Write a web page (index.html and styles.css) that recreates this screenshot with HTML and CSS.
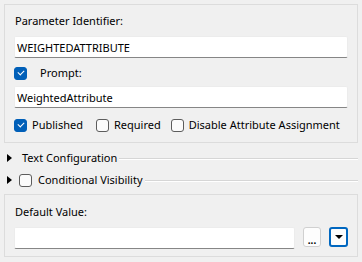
FILE: index.html
```html
<!DOCTYPE html>
<html lang="en">
<head>
    <meta charset="UTF-8">
    <title>Parameter Editor</title>
    <link rel="stylesheet" href="styles.css">
</head>
<body>
    <div class="group group-main">
        <div class="label">Parameter Identifier:</div>
        <input type="text" class="field field-id" value="WEIGHTEDATTRIBUTE">

        <div class="check-row row-prompt">
            <span class="box checked"></span>
            <span class="prompt-text">Prompt:</span>
        </div>
        <input type="text" class="field field-prompt" value="WeightedAttribute">

        <div class="check-row row-flags">
            <label class="check"><span class="box checked"></span>Published</label>
            <label class="check check-required"><span class="box"></span>Required</label>
            <label class="check"><span class="box"></span>Disable Attribute Assignment</label>
        </div>
    </div>

    <div class="section-head head-text">
        <span class="arrow"></span>
        <span class="head-title">Text Configuration</span>
        <span class="rule"></span>
    </div>
    <div class="section-head head-cond">
        <span class="arrow"></span>
        <span class="box"></span>
        <span class="head-title">Conditional Visibility</span>
        <span class="rule"></span>
    </div>

    <div class="group group-default">
        <div class="label">Default Value:</div>
        <div class="value-row">
            <input type="text" class="field field-default" value="">
            <button class="btn-dots">...</button>
            <button class="btn-drop"><span class="drop-arrow"></span></button>
        </div>
    </div>
</body>
</html>
```

FILE: styles.css
```css
* {
    box-sizing: border-box;
}

body {
    margin: 0;
    padding: 4px 0 0 0;
    background-color: #f0f0f0;
    font-family: "Segoe UI", "Noto Sans", sans-serif;
    font-size: 11px;
    line-height: 16px;
    color: #000;
}

.group {
    margin: 0 4px;
    border: 1px solid #dcdcdc;
    display: flex;
    flex-direction: column;
}

.group-main {
    padding: 8px 9px 9px 9px;
}

.group-default {
    margin-top: 6px;
    padding: 9px 9px 7px 9px;
}

.label {
    height: 16px;
    padding-left: 1px;
}

.field {
    display: block;
    height: 22px;
    width: 100%;
    margin-top: 7px;
    padding: 0 2px;
    background-color: #fff;
    border: 1px solid #ececec;
    border-bottom-color: #868686;
    border-radius: 2px;
    font-family: inherit;
    font-size: 11px;
    color: #000;
    outline: none;
}

.field-prompt {
    margin-top: 5px;
}

.check-row {
    display: flex;
    align-items: center;
    height: 16px;
    white-space: nowrap;
}

.row-prompt {
    margin-top: 7px;
}

.row-flags {
    margin-top: 9px;
}

.prompt-text {
    margin-left: 13px;
}

.check {
    display: flex;
    align-items: center;
    margin-right: 13px;
}

.check-required {
    margin-right: 10px;
}

.box {
    display: inline-block;
    width: 13px;
    height: 13px;
    margin-right: 5px;
    border: 1px solid #5c5c5c;
    border-radius: 3px;
    background-color: #fbfbfb;
    flex-shrink: 0;
}

.box.checked {
    position: relative;
    border-color: #005fb8;
    background-color: #005fb8;
}

.box.checked::after {
    content: "";
    position: absolute;
    left: 3px;
    top: 2px;
    width: 5px;
    height: 3px;
    border-left: 1px solid #fff;
    border-bottom: 1px solid #fff;
    transform: rotate(-45deg);
}

.row-prompt .box {
    margin-right: 0;
}

.section-head {
    display: flex;
    align-items: center;
    height: 16px;
    margin-right: 4px;
    padding-left: 7px;
    white-space: nowrap;
}

.head-text {
    margin-top: 7px;
}

.head-cond {
    margin-top: 6px;
}

.arrow {
    width: 0;
    height: 0;
    border-top: 4.5px solid transparent;
    border-bottom: 4.5px solid transparent;
    border-left: 5px solid #000;
    margin-right: 10px;
}

.head-cond .arrow {
    margin-right: 7px;
}

.head-cond .box {
    margin-right: 6px;
}

.rule {
    flex: 1;
    height: 2px;
    margin-left: 2px;
    margin-top: 2px;
    border-top: 1px solid #d6d6d6;
    border-bottom: 1px solid #fff;
}

.value-row {
    display: flex;
    align-items: flex-start;
    margin-top: 7px;
}

.field-default {
    flex: 1;
    margin-top: 0;
}

.btn-dots,
.btn-drop {
    height: 20px;
    padding: 0;
    border-radius: 3px;
    background-color: #fdfdfd;
    font-family: inherit;
}

.btn-dots {
    width: 18px;
    margin-left: 8px;
    border: 1px solid #d0d0d0;
    font-size: 10px;
    font-weight: bold;
    line-height: 24px;
    color: #000;
}

.btn-drop {
    width: 19px;
    margin-left: 8px;
    border: 2px solid #0067c0;
    display: flex;
    align-items: center;
    justify-content: center;
}

.drop-arrow {
    width: 0;
    height: 0;
    border-left: 4px solid transparent;
    border-right: 4px solid transparent;
    border-top: 4px solid #000;
}
```
